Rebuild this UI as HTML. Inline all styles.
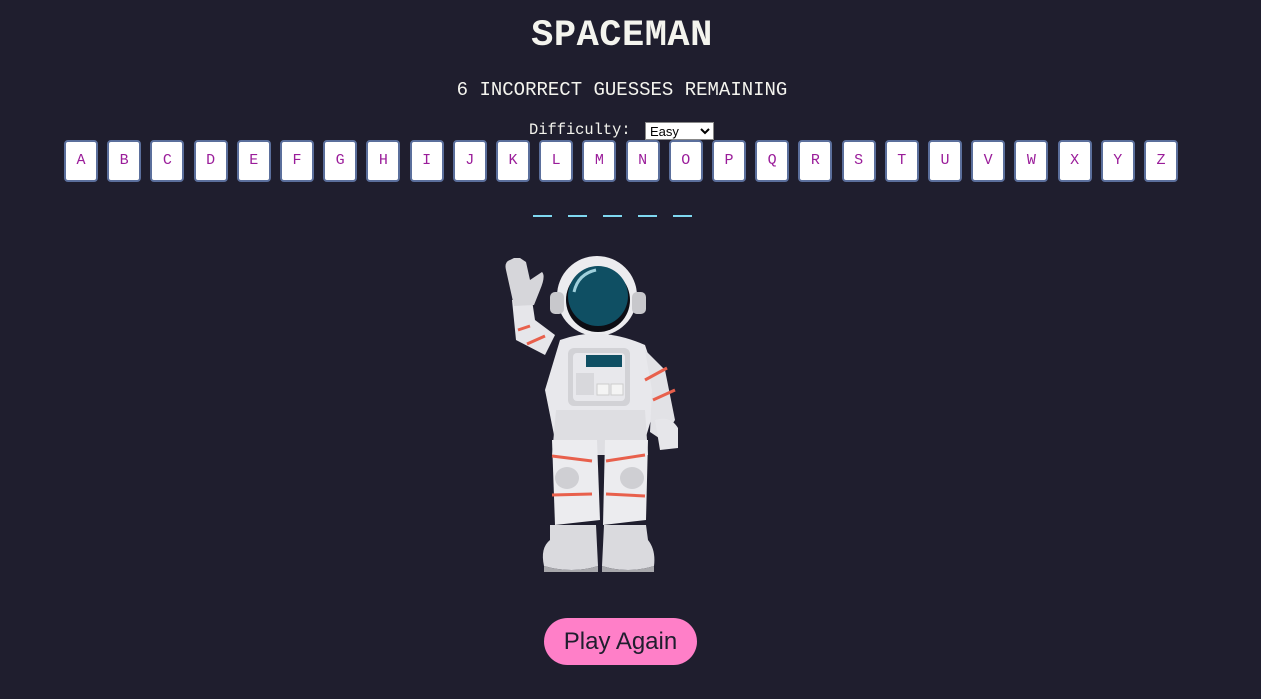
<!DOCTYPE html>
<html><head><style>
body{margin:0;width:1261px;height:699px;background:#1f1e2e;overflow:hidden;position:relative;font-family:"Liberation Mono",monospace;color:#f4f4ee}
.t{position:absolute;left:0;width:1244px;text-align:center}
h1{position:absolute;left:0;width:1244px;text-align:center;top:15px;margin:0;font-size:37px;font-weight:bold;font-family:"Liberation Mono",monospace;letter-spacing:0.5px}
.b{position:absolute;top:140px;width:30px;height:38px;background:#fff;border:2px solid #5b6f9c;border-radius:4px;color:#9a1c9a;font-size:15px;text-align:center;line-height:38px}
.u{position:absolute;top:215px;width:19px;height:2px;background:#7fd8f0}
select{position:absolute;left:645px;top:122px;width:69px;height:18px;font-size:13px;font-family:"Liberation Sans",sans-serif;padding:0;border:1px solid #888;background:#fff}
.p{position:absolute;left:544px;top:618px;width:153px;height:47px;border-radius:24px;background:#ff7fc8;color:#1f1e2e;font-family:"Liberation Sans",sans-serif;font-size:24px;text-align:center;line-height:47px}
</style></head><body>
<h1>SPACEMAN</h1>
<div class="t" style="top:79px;font-size:19px">6 INCORRECT GUESSES REMAINING</div>
<div style="position:absolute;left:529px;top:121px;font-size:15.4px">Difficulty:</div>
<select><option>Easy</option></select>
<div id="L"></div>
<script>
var s="ABCDEFGHIJKLMNOPQRSTUVWXYZ",h="";
for(var i=0;i<26;i++)h+='<div class="b" style="left:'+(64+i*43.2).toFixed(1)+'px">'+s[i]+'</div>';
for(var j=0;j<5;j++)h+='<div class="u" style="left:'+(533+j*35)+'px"></div>';
document.getElementById("L").innerHTML=h;
</script>
<svg style="position:absolute;left:0;top:0" width="1261" height="699">
<path d="M512 300 L516 340 L545 355 L555 335 L535 320 L532 300Z" fill="#e6e6ea"/>
<path d="M506 270 Q504 262 510 260 L514 258 L520 258 L526 262 L530 280 L542 272 Q546 276 540 290 L534 305 L514 306 Z" fill="#d6d6da"/>
<path d="M518 330 L530 326 M527 344 L545 336" stroke="#e8604c" stroke-width="3"/>
<circle cx="597" cy="296" r="40" fill="#ececef"/>
<rect x="550" y="292" width="14" height="22" rx="5" fill="#c8c8cc"/>
<rect x="632" y="292" width="14" height="22" rx="5" fill="#c8c8cc"/>
<circle cx="598" cy="300" r="32" fill="#0d0d14"/>
<circle cx="598" cy="296" r="30" fill="#0f4f63"/>
<path d="M574 292 Q578 274 596 270" stroke="#9fd0dc" stroke-width="3" fill="none"/>
<path d="M560 340 Q600 325 645 345 L660 390 L645 440 L555 440 L545 390Z" fill="#e8e8ec"/>
<path d="M645 350 L665 370 L675 420 L662 440 L650 432 L652 390Z" fill="#e2e2e6"/>
<path d="M645 380 L667 368 M653 400 L675 390" stroke="#e8604c" stroke-width="3"/>
<path d="M655 420 Q670 415 678 428 L678 448 L660 450 Z" fill="#e6e6ea"/>
<rect x="568" y="348" width="62" height="58" rx="6" fill="#d2d2d6"/>
<rect x="573" y="353" width="52" height="48" rx="4" fill="#e8e8ec"/>
<rect x="586" y="355" width="36" height="12" fill="#0f4f63"/>
<rect x="576" y="373" width="18" height="22" fill="#d8d8dc"/>
<rect x="597" y="384" width="12" height="11" fill="#f4f4f4" stroke="#ccc"/>
<rect x="611" y="384" width="12" height="11" fill="#f4f4f4" stroke="#ccc"/>
<path d="M556 410 L645 410 L648 455 L552 455Z" fill="#dedee2"/>
<path d="M552 440 L597 440 L600 520 L555 525Z" fill="#ececef"/>
<path d="M605 440 L648 440 L646 520 L603 525Z" fill="#ececef"/>
<ellipse cx="567" cy="478" rx="12" ry="11" fill="#cfcfd3"/>
<ellipse cx="632" cy="478" rx="12" ry="11" fill="#cfcfd3"/>
<path d="M552 456 L592 461 M606 461 L645 455 M552 495 L592 494 M606 494 L645 496" stroke="#e8604c" stroke-width="3"/>
<path d="M550 525 L596 525 L598 566 Q572 574 544 566 Q540 548 550 540Z" fill="#dadade"/>
<path d="M604 525 L646 525 L648 540 Q656 550 654 566 Q628 574 602 566Z" fill="#dadade"/>
<path d="M544 566 Q572 574 598 566 L598 572 L544 572Z M602 566 Q628 574 654 566 L654 572 L602 572Z" fill="#a8a8ac"/>
</svg>
<div class="p">Play Again</div>
</body></html>
